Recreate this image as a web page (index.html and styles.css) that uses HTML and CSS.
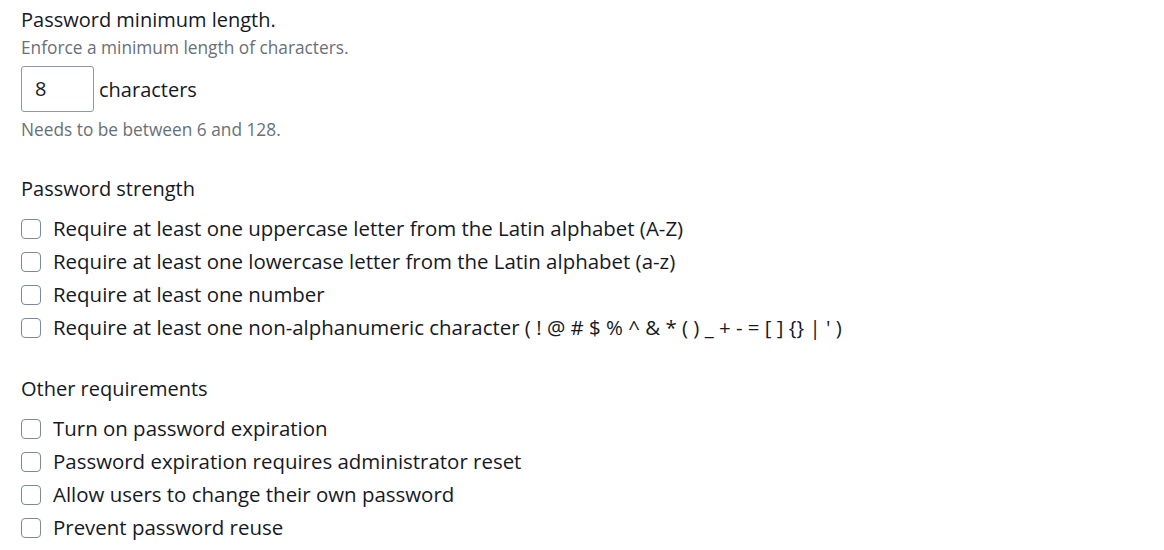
FILE: index.html
```html
<!DOCTYPE html>
<html lang="en">
<head>
<meta charset="utf-8">
<title>Password policy</title>
<link rel="stylesheet" href="styles.css">
</head>
<body>
<div class="page">
  <section class="field">
    <div class="label">Password minimum length.</div>
    <div class="desc">Enforce a minimum length of characters.</div>
    <div class="input-row">
      <div class="input">8</div>
      <span class="unit">characters</span>
    </div>
    <div class="hint">Needs to be between 6 and 128.</div>
  </section>

  <section class="group strength">
    <div class="label">Password strength</div>
    <ul class="checks">
      <li><span class="box"></span><span>Require at least one uppercase letter from the Latin alphabet (A-Z)</span></li>
      <li><span class="box"></span><span>Require at least one lowercase letter from the Latin alphabet (a-z)</span></li>
      <li><span class="box"></span><span>Require at least one number</span></li>
      <li><span class="box"></span><span>Require at least one non-alphanumeric character ( ! @ # $ % ^ &amp; * ( ) _ + - = [ ] {} | ' )</span></li>
    </ul>
  </section>

  <section class="group other">
    <div class="label">Other requirements</div>
    <ul class="checks">
      <li><span class="box"></span><span>Turn on password expiration</span></li>
      <li><span class="box"></span><span>Password expiration requires administrator reset</span></li>
      <li><span class="box"></span><span>Allow users to change their own password</span></li>
      <li><span class="box"></span><span>Prevent password reuse</span></li>
    </ul>
  </section>
</div>
</body>
</html>
```

FILE: styles.css
```css
html, body {
  margin: 0;
  padding: 0;
  background: #ffffff;
}
body {
  font-family: "Open Sans", "Noto Sans", sans-serif;
  color: #16191f;
}
.page {
  padding: 8px 0 0 21px;
}
.label {
  font-size: 20px;
  line-height: 24px;
  color: #16191f;
}
.desc {
  font-size: 17.3px;
  line-height: 22px;
  color: #687078;
  margin-top: 5px;
}
.input-row {
  display: flex;
  align-items: center;
  margin-top: 7px;
}
.input {
  box-sizing: border-box;
  width: 73px;
  height: 46px;
  border: 1px solid #8d99a8;
  border-radius: 3px;
  font-size: 20px;
  line-height: 44px;
  padding-left: 13px;
  color: #16191f;
}
.unit {
  font-size: 20px;
  margin-left: 5px;
}
.hint {
  font-size: 17.3px;
  line-height: 22px;
  color: #687078;
  margin-top: 7px;
}
.group {
  margin-top: 36px;
}
.other {
  margin-top: 33px;
}
.checks {
  list-style: none;
  margin: 11px 0 0;
  padding: 0;
}
.checks li {
  display: flex;
  align-items: center;
  height: 33px;
  line-height: 33px;
  font-size: 20.45px;
}
.box {
  box-sizing: border-box;
  width: 20px;
  height: 20px;
  border: 1.5px solid #7d8998;
  border-radius: 4px;
  margin-right: 12px;
  flex: none;
}
```
